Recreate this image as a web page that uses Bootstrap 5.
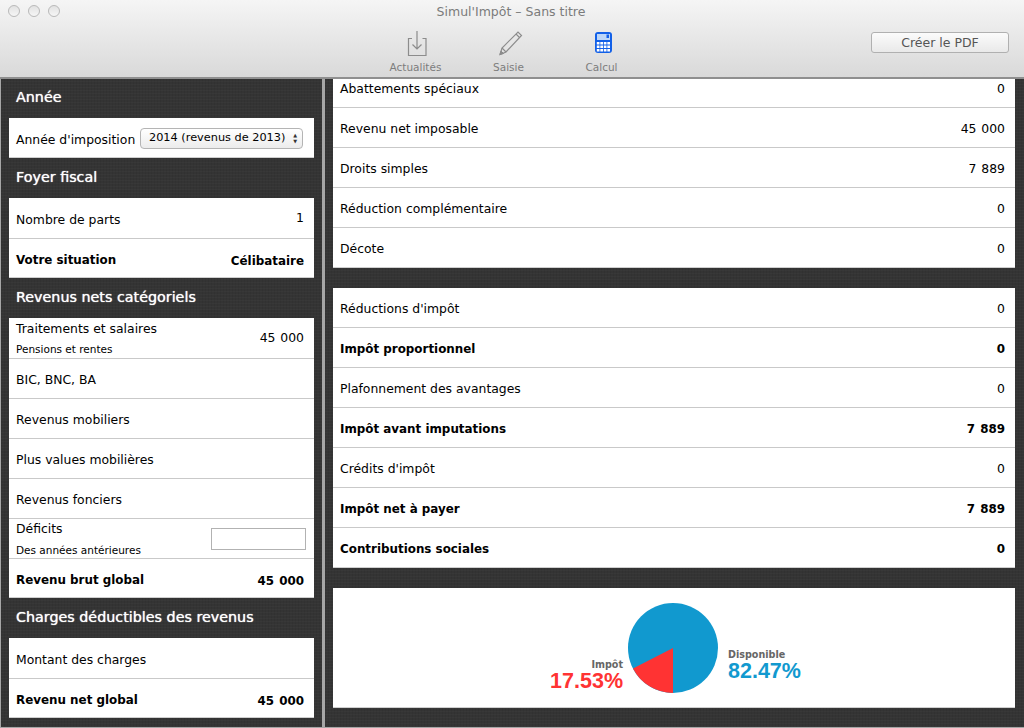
<!DOCTYPE html>
<html lang="fr"><head><meta charset="utf-8"><title>Simul'Impôt</title>
<link href="https://cdn.jsdelivr.net/npm/bootstrap@5.3.0/dist/css/bootstrap.min.css" rel="stylesheet">
<script src="https://cdn.jsdelivr.net/npm/bootstrap@5.3.0/dist/js/bootstrap.bundle.min.js"></script>
<style>
html,body{margin:0;height:728px;overflow:hidden;background:#343434}
body{font-family:"DejaVu Sans",sans-serif;font-size:12.4px;color:#000;width:1024px}
.win-top{height:79px;background:linear-gradient(#f5f5f5,#d9d9d9);border-bottom:2px solid #8f8f8f;position:relative}
.lights{position:absolute;left:8px;top:5px}
.light{width:12px;height:12px;border-radius:50%;border:1px solid #b9b9b9;background:linear-gradient(#e2e2e2,#f6f6f6)}
.win-title{height:24px;line-height:23px;text-align:center;color:#7b7b7b;font-size:12.5px;padding-right:2px}
.tools{position:absolute;top:30px;left:369px}
.tool{width:93px;color:#7d7d7d;font-size:10.5px;text-align:center;line-height:13px}
.tool svg{display:block;margin:0 auto 4px;height:27px;width:32px}
.pdf{position:absolute;left:871px;top:32px;width:138px;height:21px;padding:0;border:1px solid #b0b0b0;border-radius:3px;background:linear-gradient(#fbfbfb,#e9e9e9);color:#555;font-size:12.5px;line-height:18px}
.panes{height:649px;border-left:1px solid #a6a6a6;border-bottom:1px solid #a6a6a6}
.pane-left{width:321px;padding:0 8px;flex:none}
.pane-sep{width:3px;background:#a6a6a6;flex:none}
.pane-right{flex:1;padding:0 9px 0 8px}
.pane-left,.pane-right{background-color:#343434;background-image:repeating-linear-gradient(0deg,rgba(255,255,255,.018) 0 1px,transparent 1px 3px),repeating-linear-gradient(90deg,rgba(0,0,0,.05) 0 1px,transparent 1px 3px)}
.sec-title{height:39px;line-height:36px;padding-left:7px;color:#fff;font-size:14.3px;text-shadow:0 0 1px #fff}
.sec-title.next{height:40px;line-height:38px}
.sheet{background:#fff;box-shadow:inset 0 -1px #cfcfcf}
.sheet.pad{padding-bottom:1px}
.line{height:40px;padding:3px 10px 0 7px;border-top:1px solid #c9c9c9}
.line:first-child{border-top:0}
.pane-left .line{padding-top:5px}
.pane-left .line.plain{padding-top:3px}
.line.short{height:39px}
.line.cut{height:28px;padding-top:1px;align-items:flex-start!important;line-height:18px}
.strong{font-weight:700;font-size:11.9px}
.pane-right .strong{padding-top:5px}
.num{word-spacing:1px}
.val-up{margin-top:-5px}
.val-low{margin-top:2px}
.sub{font-size:10.5px;line-height:14px;margin-top:4px}
.pile{line-height:20px;align-self:flex-start;margin-top:-5px}
.pile.top{margin-top:-4px}
.pile.top .sub{margin-top:3px}
.year{width:163px;height:21px;margin:-5px 1px 0 0;border:1px solid #b4b4b4;border-radius:4px;background:linear-gradient(#fff,#ececec);font-size:11.3px;line-height:18px;padding:0 5px 0 8px;white-space:nowrap}
.updown{font-size:5px;line-height:6px;text-align:center;color:#333}
.blank{width:95px;height:22px;border:1px solid #b2b2b2;background:#fff;margin:-5px -2px 0 0}
.gap-r{height:20px}
.chart{height:120px;position:relative}
.chart svg{position:absolute;left:295px;top:15px}
.leg{position:absolute}
.leg small{display:block;font-size:9.6px;font-weight:700;color:#666;line-height:11px}
.leg b{font-size:21.5px;font-family:"Liberation Sans",sans-serif;font-weight:700;display:block;line-height:22px}
.leg-a{right:392px;top:71px;text-align:right;color:#f33}
.leg-b{left:395px;top:61px;color:#1199cf}
</style></head><body>
<div class="win-top">
  <div class="lights d-flex gap-2"><span class="light"></span><span class="light"></span><span class="light"></span></div>
  <div class="win-title">Simul'Impôt – Sans titre</div>
  <div class="tools d-flex">
    <div class="tool"><svg viewBox="0 0 32 27" fill="none" stroke="#8c8c8c"><path d="M12 8.5H8.5V25.5H26V8.5H22.5" stroke-width="1.2"/><path d="M17 1V19M12.5 14.5L17 19L21.5 14.5" stroke-width="1.2"/></svg>Actualités</div>
    <div class="tool"><svg viewBox="0 0 32 27" fill="none" stroke="#8c8c8c"><path d="M7 24.5L9 18L25 2L28.5 5.5L13 22Z" stroke-width="1.2"/><path d="M9 18L13 22M23 4L26.5 7.5" stroke-width="1.1"/><path d="M7 24.5L8 21L10.5 23.5Z" fill="#8c8c8c"/></svg>Saisie</div>
    <div class="tool"><svg viewBox="0 0 32 27"><rect x="9" y="2" width="17" height="21" rx="3" fill="#1260e8"/><rect x="11" y="4" width="13" height="6" fill="#bcd6f8"/><rect x="20.5" y="4.5" width="2.5" height="3.5" fill="#1260e8"/><g fill="#fff"><rect x="10.8" y="12" width="2.7" height="2.5"/><rect x="14.3" y="12" width="2.7" height="2.5"/><rect x="17.8" y="12" width="2.7" height="2.5"/><rect x="21.3" y="12" width="2.7" height="2.5"/><rect x="10.8" y="15.5" width="2.7" height="2.5"/><rect x="14.3" y="15.5" width="2.7" height="2.5"/><rect x="17.8" y="15.5" width="2.7" height="2.5"/><rect x="21.3" y="15.5" width="2.7" height="2.5"/><rect x="10.8" y="19" width="2.7" height="2.5"/><rect x="14.3" y="19" width="2.7" height="2.5"/><rect x="17.8" y="19" width="2.7" height="2.5"/><rect x="21.3" y="19" width="2.7" height="2.5"/></g></svg>Calcul</div>
  </div>
  <button type="button" class="btn pdf">Créer le PDF</button>
</div>
<div class="panes d-flex">
  <div class="pane-left">
    <div class="sec-title">Année</div>
    <div class="sheet">
      <div class="line d-flex align-items-center justify-content-between"><span>Année d'imposition</span>
        <span class="year d-flex align-items-center justify-content-between"><span>2014 (revenus de 2013)</span><span class="updown">▲<br>▼</span></span></div>
    </div>
    <div class="sec-title next">Foyer fiscal</div>
    <div class="sheet">
      <div class="line d-flex align-items-center justify-content-between"><span>Nombre de parts</span><span class="val-up">1</span></div>
      <div class="line d-flex align-items-center justify-content-between strong"><span>Votre situation</span><span class="val-low">Célibataire</span></div>
    </div>
    <div class="sec-title next">Revenus nets catégoriels</div>
    <div class="sheet">
      <div class="line d-flex align-items-center justify-content-between"><div class="pile top"><div>Traitements et salaires</div><div class="sub">Pensions et rentes</div></div><span class="val-up num">45 000</span></div>
      <div class="line plain d-flex align-items-center"><span>BIC, BNC, BA</span></div>
      <div class="line plain d-flex align-items-center"><span>Revenus mobiliers</span></div>
      <div class="line plain d-flex align-items-center"><span>Plus values mobilières</span></div>
      <div class="line plain d-flex align-items-center"><span>Revenus fonciers</span></div>
      <div class="line d-flex align-items-center justify-content-between"><div class="pile"><div>Déficits</div><div class="sub">Des années antérieures</div></div><span class="blank"></span></div>
      <div class="line d-flex align-items-center justify-content-between strong"><span>Revenu brut global</span><span class="val-low num">45 000</span></div>
    </div>
    <div class="sec-title next">Charges déductibles des revenus</div>
    <div class="sheet">
      <div class="line d-flex align-items-center"><span>Montant des charges</span></div>
      <div class="line d-flex align-items-center justify-content-between strong"><span>Revenu net global</span><span class="val-low num">45 000</span></div>
    </div>
  </div>
  <div class="pane-sep"></div>
  <div class="pane-right">
    <div class="sheet pad">
      <div class="line cut d-flex justify-content-between"><span>Abattements spéciaux</span><span>0</span></div>
      <div class="line d-flex align-items-center justify-content-between"><span>Revenu net imposable</span><span class="num">45 000</span></div>
      <div class="line d-flex align-items-center justify-content-between"><span>Droits simples</span><span class="num">7 889</span></div>
      <div class="line d-flex align-items-center justify-content-between"><span>Réduction complémentaire</span><span>0</span></div>
      <div class="line d-flex align-items-center justify-content-between"><span>Décote</span><span>0</span></div>
    </div>
    <div class="gap-r"></div>
    <div class="sheet pad">
      <div class="line short d-flex align-items-center justify-content-between"><span>Réductions d'impôt</span><span>0</span></div>
      <div class="line d-flex align-items-center justify-content-between strong"><span>Impôt proportionnel</span><span>0</span></div>
      <div class="line d-flex align-items-center justify-content-between"><span>Plafonnement des avantages</span><span>0</span></div>
      <div class="line d-flex align-items-center justify-content-between strong"><span>Impôt avant imputations</span><span class="num">7 889</span></div>
      <div class="line d-flex align-items-center justify-content-between"><span>Crédits d'impôt</span><span>0</span></div>
      <div class="line d-flex align-items-center justify-content-between strong"><span>Impôt net à payer</span><span class="num">7 889</span></div>
      <div class="line d-flex align-items-center justify-content-between strong"><span>Contributions sociales</span><span>0</span></div>
    </div>
    <div class="gap-r"></div>
    <div class="sheet chart">
      <svg width="90" height="90" viewBox="0 0 90 90"><circle cx="45" cy="45" r="45" fill="#1199cf"/><path d="M45 45V90A45 45 0 0 1 5 65.5Z" fill="#f33"/></svg>
      <div class="leg leg-a"><small>Impôt</small><b>17.53%</b></div>
      <div class="leg leg-b"><small>Disponible</small><b>82.47%</b></div>
    </div>
  </div>
</div>
</body></html>
